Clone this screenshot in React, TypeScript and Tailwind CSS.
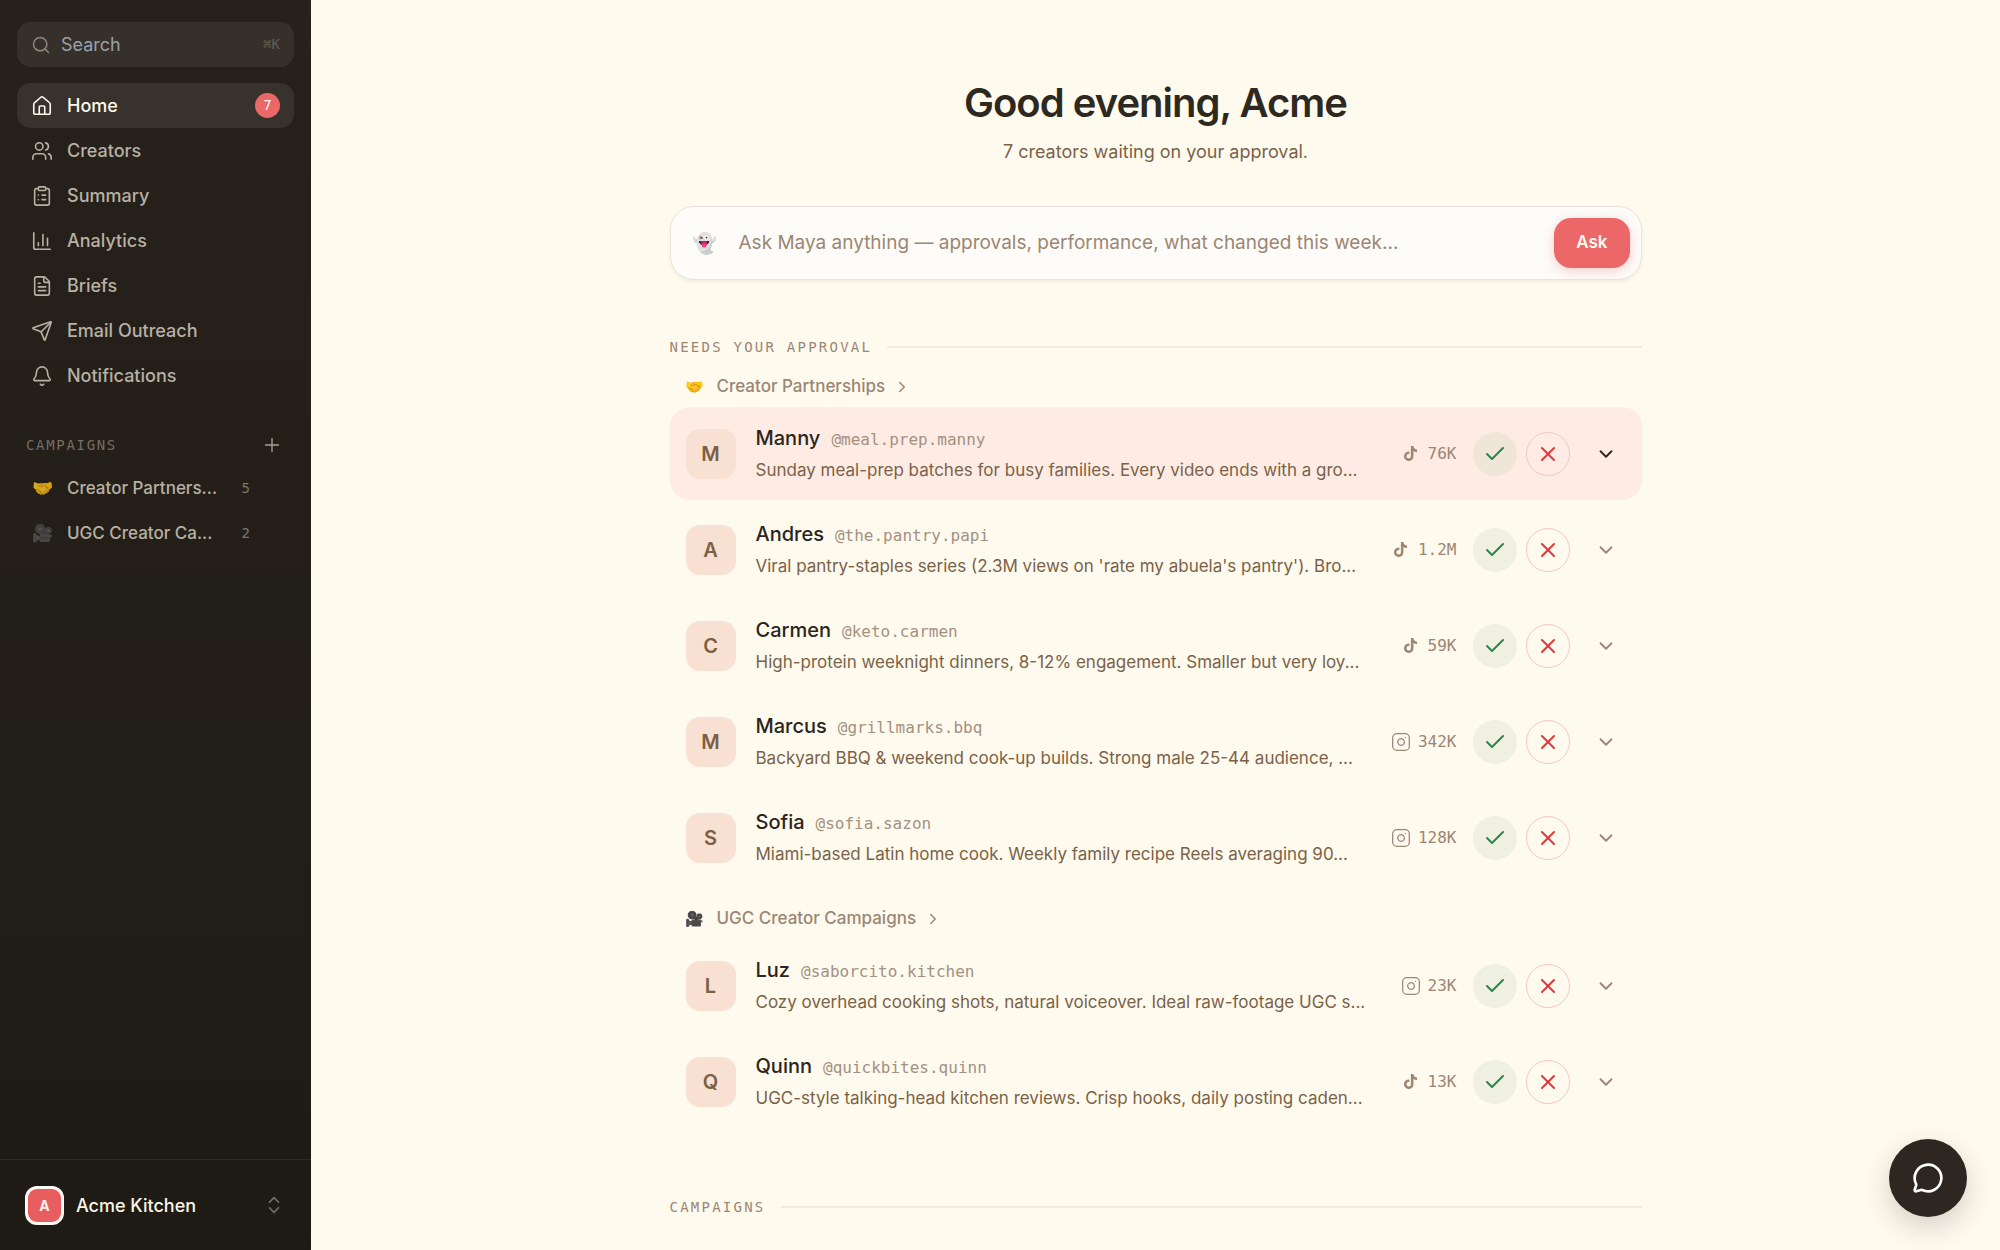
import React from 'react';
import {
    Bell,
    ChartColumn,
    Check,
    ChevronDown,
    ChevronRight,
    ChevronsUpDown,
    ClipboardList,
    FileText,
    House,
    Instagram,
    MessageCircle,
    Plus,
    Search,
    Send,
    Users,
    X,
    type LucideIcon,
} from 'lucide-react';
import { FaTiktok } from 'react-icons/fa6';

interface NavItem {
    label: string;
    icon: LucideIcon;
    badge?: number;
}

interface Creator {
    name: string;
    handle: string;
    bio: string;
    platform: 'tiktok' | 'instagram';
    followers: string;
}

interface Group {
    emoji: string;
    title: string;
    creators: Creator[];
}

const navItems: NavItem[] = [
    { label: 'Home', icon: House, badge: 7 },
    { label: 'Creators', icon: Users },
    { label: 'Summary', icon: ClipboardList },
    { label: 'Analytics', icon: ChartColumn },
    { label: 'Briefs', icon: FileText },
    { label: 'Email Outreach', icon: Send },
    { label: 'Notifications', icon: Bell },
];

const campaigns = [
    { emoji: '🤝', label: 'Creator Partners...', count: 5 },
    { emoji: '🎥', label: 'UGC Creator Ca...', count: 2 },
];

const groups: Group[] = [
    {
        emoji: '🤝',
        title: 'Creator Partnerships',
        creators: [
            { name: 'Manny', handle: '@meal.prep.manny', bio: 'Sunday meal-prep batches for busy families. Every video ends with a gro...', platform: 'tiktok', followers: '76K' },
            { name: 'Andres', handle: '@the.pantry.papi', bio: "Viral pantry-staples series (2.3M views on 'rate my abuela's pantry'). Bro...", platform: 'tiktok', followers: '1.2M' },
            { name: 'Carmen', handle: '@keto.carmen', bio: 'High-protein weeknight dinners, 8-12% engagement. Smaller but very loy...', platform: 'tiktok', followers: '59K' },
            { name: 'Marcus', handle: '@grillmarks.bbq', bio: 'Backyard BBQ & weekend cook-up builds. Strong male 25-44 audience, ...', platform: 'instagram', followers: '342K' },
            { name: 'Sofia', handle: '@sofia.sazon', bio: 'Miami-based Latin home cook. Weekly family recipe Reels averaging 90...', platform: 'instagram', followers: '128K' },
        ],
    },
    {
        emoji: '🎥',
        title: 'UGC Creator Campaigns',
        creators: [
            { name: 'Luz', handle: '@saborcito.kitchen', bio: 'Cozy overhead cooking shots, natural voiceover. Ideal raw-footage UGC s...', platform: 'instagram', followers: '23K' },
            { name: 'Quinn', handle: '@quickbites.quinn', bio: 'UGC-style talking-head kitchen reviews. Crisp hooks, daily posting caden...', platform: 'tiktok', followers: '13K' },
        ],
    },
];

const Sidebar = () => (
    <aside className="flex w-[311px] shrink-0 flex-col bg-linear-to-b from-[#27211b] to-[#1e1b15]">
        <div className="flex-1 px-[17px] pt-[22px]">
            <label className="flex h-[45px] items-center gap-[10px] rounded-[14px] bg-[#35302a] px-[14px]">
                <Search size={20} strokeWidth={1.75} className="shrink-0 text-[#8f887d]" />
                <input
                    type="search"
                    aria-label="Search"
                    placeholder="Search"
                    className="min-w-0 flex-1 bg-transparent text-[18px] leading-6 outline-none placeholder:text-[#99a1a9]"
                />
                <kbd className="font-['DejaVu_Sans_Mono',monospace] text-[14px] text-[#655f57]">⌘K</kbd>
            </label>
            <nav className="mt-4">
                {navItems.map(({ label, icon: Icon, badge }) => (
                    <a
                        key={label}
                        href="#"
                        className={`flex h-[45px] items-center gap-[14px] rounded-[14px] px-[14px] text-[18px] font-medium ${
                            badge ? 'bg-[#37322c] text-[#fdf8ec]' : 'text-[#b8b1a4]'
                        }`}
                    >
                        <Icon size={22} strokeWidth={1.75} />
                        <span className="flex-1">{label}</span>
                        {badge && (
                            <span className="flex size-[25px] items-center justify-center rounded-full bg-[#ec6767] font-['DejaVu_Sans_Mono',monospace] text-[14px] text-[#fffaee]">
                                {badge}
                            </span>
                        )}
                    </a>
                ))}
            </nav>
            <div className="mt-[37px] flex h-5 items-center justify-between pr-[11px] pl-[9px]">
                <h2 className="font-['DejaVu_Sans_Mono',monospace] text-[14px] tracking-[0.12em] text-[#756e64]">CAMPAIGNS</h2>
                <button type="button" aria-label="Add campaign" className="text-[#a8a195]">
                    <Plus size={22} strokeWidth={1.5} />
                </button>
            </div>
            <div className="mt-[11px]">
                {campaigns.map((c) => (
                    <a key={c.label} href="#" className="flex h-[45px] items-center gap-[14px] px-[14px] text-[17px] font-medium whitespace-nowrap text-[#b8b1a4]">
                        <span className="flex w-[22px] justify-center text-[17px] opacity-80">{c.emoji}</span>
                        <span className="flex-1">{c.label}</span>
                        <span className="mr-[30px] font-['DejaVu_Sans_Mono',monospace] text-[14px] text-[#7d766b]">{c.count}</span>
                    </a>
                ))}
            </div>
        </div>
        <button type="button" className="flex h-[91px] items-center gap-3 border-t border-[#2f2a24] pr-[26px] pl-[25px] text-left">
            <span className="flex size-[39px] items-center justify-center rounded-[12px] border-[3px] border-[#fffaf5] bg-[#e85d5f] text-[14px] font-bold text-[#fff3ea]">A</span>
            <span className="flex-1 text-[18px] font-medium text-[#fbf5e8]">Acme Kitchen</span>
            <ChevronsUpDown size={22} strokeWidth={1.75} className="text-[#756f66]" />
        </button>
    </aside>
);

const SectionLabel = ({ children }: { children: React.ReactNode }) => (
    <div className="flex h-5 items-center gap-[15px]">
        <h2 className="font-['DejaVu_Sans_Mono',monospace] text-[14px] tracking-[0.16em] text-[#9c8674]">{children}</h2>
        <div className="h-[2px] flex-1 bg-[#f0ebe0]" />
    </div>
);

const CreatorRow = ({ creator, active }: { creator: Creator; active: boolean }) => (
    <li className={`flex h-[93px] items-center rounded-[20px] pr-[14px] pl-4 ${active ? 'bg-[#feece4]' : ''}`}>
        <div className="flex size-[50px] shrink-0 items-center justify-center rounded-[14px] bg-[#f8e0d3] text-[20px] font-semibold text-[#7a6045]">
            {creator.name[0]}
        </div>
        <div className="ml-5 min-w-0 flex-1 whitespace-nowrap">
            <div className="flex items-baseline gap-[11px] leading-7">
                <span className="text-[20px] font-medium text-[#2a251d]">{creator.name}</span>
                <span className="font-['DejaVu_Sans_Mono',monospace] text-[16px] text-[#a39181]">{creator.handle}</span>
            </div>
            <p className="mt-[2px] text-[17px] leading-7 text-[#7a6248]">{creator.bio}</p>
        </div>
        <div className="flex items-center gap-[7px] text-[#9c8674]">
            <span className="flex w-5 justify-center">
                {creator.platform === 'tiktok' ? <FaTiktok size={15} /> : <Instagram size={20} strokeWidth={1.5} />}
            </span>
            <span className="font-['DejaVu_Sans_Mono',monospace] text-[16px]">{creator.followers}</span>
        </div>
        <button
            type="button"
            aria-label={`Approve ${creator.name}`}
            className={`ml-4 flex size-11 items-center justify-center rounded-full text-[#2f8549] ${active ? 'bg-[#efe5d9]' : 'bg-[#eff0e2]'}`}
        >
            <Check size={24} strokeWidth={2} />
        </button>
        <button
            type="button"
            aria-label={`Reject ${creator.name}`}
            className="ml-[9px] flex size-11 items-center justify-center rounded-full border border-[#f6c6c1] text-[#e0383c]"
        >
            <X size={24} strokeWidth={2} />
        </button>
        <button
            type="button"
            aria-label={`Show ${creator.name}`}
            className={`ml-[14px] flex size-11 items-center justify-center ${active ? 'text-[#2a251d]' : 'text-[#9c8674]'}`}
        >
            <ChevronDown size={22} strokeWidth={2} />
        </button>
    </li>
);

export default function App() {
    return (
        <div className="flex min-h-screen bg-[#fffaee] font-['Inter','Liberation_Sans',sans-serif]">
            <Sidebar />
            <main className="min-w-0 flex-1 px-8 pt-[79px]">
                <div className="mx-auto max-w-[972px]">
                    <header className="text-center">
                        <h1 className="text-[40px] leading-[48px] font-semibold tracking-tight text-[#2e2920]">Good evening, Acme</h1>
                        <p className="mt-[13px] text-[18px] leading-6 text-[#7a6248]">7 creators waiting on your approval.</p>
                    </header>

                    <form className="mt-[42px] flex items-center rounded-[24px] border border-[#e9e5de] bg-[#fdfcf9] p-[11px] pl-[21px] shadow-[0_2px_4px_rgba(60,50,40,0.07)]">
                        <span className="w-6 text-[20px] leading-6">👻</span>
                        <input
                            type="text"
                            aria-label="Ask Maya"
                            placeholder="Ask Maya anything — approvals, performance, what changed this week..."
                            className="ml-[23px] min-w-0 flex-1 bg-transparent text-[19px] outline-none placeholder:text-[#9c8674]"
                        />
                        <button type="button" className="h-[50px] rounded-[17px] bg-[#ec6767] px-[22px] text-[17px] font-semibold text-[#fffaf2] shadow-[0_3px_12px_rgba(236,103,103,0.3)]">
                            Ask
                        </button>
                    </form>

                    <section className="mt-[57px]">
                        <SectionLabel>NEEDS YOUR APPROVAL</SectionLabel>
                        <div className="mt-[10px] flex flex-col gap-[15px]">
                            {groups.map((group, g) => (
                                <div key={group.title}>
                                    <a href="#" className="flex h-10 items-center pl-4 text-[17px] font-medium text-[#9c8674]">
                                        <span className="flex w-[18px] justify-center text-[15px]">{group.emoji}</span>
                                        <span className="ml-[13px]">{group.title}</span>
                                        <ChevronRight size={18} strokeWidth={2} className="ml-2" />
                                    </a>
                                    <ul className="flex flex-col gap-[3px]">
                                        {group.creators.map((creator, i) => (
                                            <CreatorRow key={creator.handle} creator={creator} active={g === 0 && i === 0} />
                                        ))}
                                    </ul>
                                </div>
                            ))}
                        </div>
                    </section>

                    <section className="mt-[69px]">
                        <SectionLabel>CAMPAIGNS</SectionLabel>
                    </section>
                </div>
            </main>

            <button
                type="button"
                aria-label="Open chat"
                className="fixed right-[33px] bottom-[33px] flex size-[78px] items-center justify-center rounded-full bg-[#2e2721] text-white shadow-[0_10px_28px_rgba(46,39,33,0.2)]"
            >
                <MessageCircle size={32} strokeWidth={2} />
            </button>
        </div>
    );
}
